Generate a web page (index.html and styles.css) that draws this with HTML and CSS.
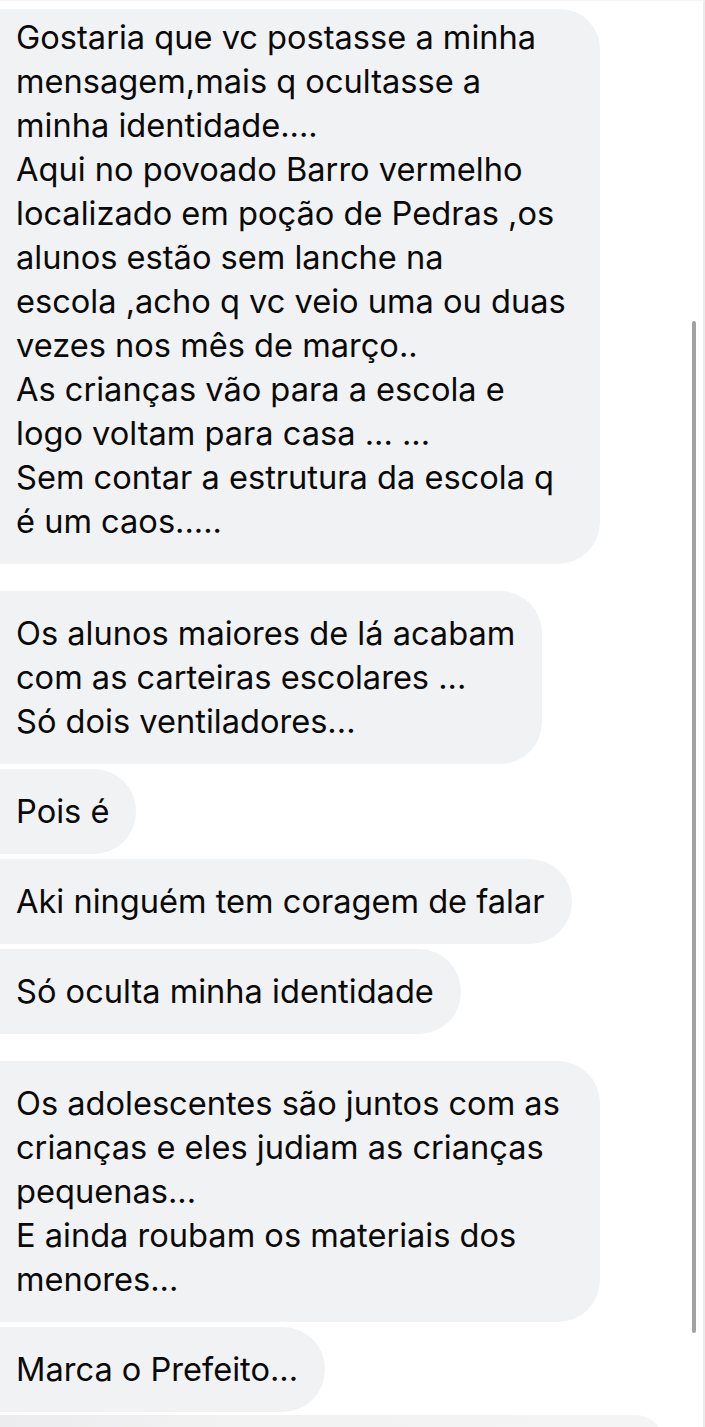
FILE: index.html
```html
<!DOCTYPE html>
<html lang="pt">
<head>
<meta charset="utf-8">
<title>Mensagens</title>
<link rel="stylesheet" href="styles.css">
</head>
<body>
<div class="screen">
  <div class="thread">
    <div class="group">
      <div class="bubble wide first">Gostaria que vc postasse a minha<br>mensagem,mais q ocultasse a<br>minha identidade....<br>Aqui no povoado Barro vermelho<br>localizado em poção de Pedras ,os<br>alunos estão sem lanche na<br>escola ,acho q vc veio uma ou duas<br>vezes nos mês de março..<br>As crianças vão para a escola e<br>logo voltam para casa ... ...<br>Sem contar a estrutura da escola q<br>é um caos.....</div>
    </div>
    <div class="group">
      <div class="bubble">Os alunos maiores de lá acabam<br>com as carteiras escolares ...<br>Só dois ventiladores...</div>
      <div class="bubble">Pois é</div>
      <div class="bubble">Aki ninguém tem coragem de falar</div>
      <div class="bubble">Só oculta minha identidade</div>
    </div>
    <div class="group">
      <div class="bubble wide">Os adolescentes são juntos com as<br>crianças e eles judiam as crianças<br>pequenas...<br>E ainda roubam os materiais dos<br>menores...</div>
      <div class="bubble">Marca o Prefeito...</div>
      <div class="bubble next"></div>
    </div>
  </div>
  <div class="scrollbar"></div>
</div>
</body>
</html>
```

FILE: styles.css
```css
html, body {
  margin: 0;
  padding: 0;
  background: #ffffff;
}

body {
  width: 705px;
  height: 1427px;
  overflow: hidden;
}

.screen {
  position: relative;
  width: 705px;
  height: 1427px;
  overflow: hidden;
  border-right: 2px solid #ececec;
  box-sizing: border-box;
  border-top: 1px solid #f4f4f4;
}

.thread {
  display: flex;
  flex-direction: column;
  gap: 27px;
  padding-top: 8px;
}

.group {
  display: flex;
  flex-direction: column;
  align-items: flex-start;
  gap: 5px;
}

.bubble {
  box-sizing: border-box;
  margin-left: -40px;
  padding: 20px 27px 21px 56px;
  border-radius: 42px;
  background: #f1f2f4;
  color: #0a0a0a;
  font-family: Inter, "Liberation Sans", sans-serif;
  font-size: 32.6px;
  line-height: 44px;
  white-space: nowrap;
}

.bubble.wide {
  width: 640px;
}

.bubble.first {
  padding-top: 6px;
  border-top-left-radius: 0;
  border-top-right-radius: 40px;
}

.bubble.next {
  width: 705px;
  height: 60px;
  margin-top: -2px;
  background: linear-gradient(90deg, #ebebed 0%, #f2f2f3 40%, #f4f4f4 100%);
}

.scrollbar {
  position: absolute;
  left: 692px;
  top: 320px;
  width: 4px;
  height: 1012px;
  border-radius: 2px;
  background: #a2a2a2;
}
```
